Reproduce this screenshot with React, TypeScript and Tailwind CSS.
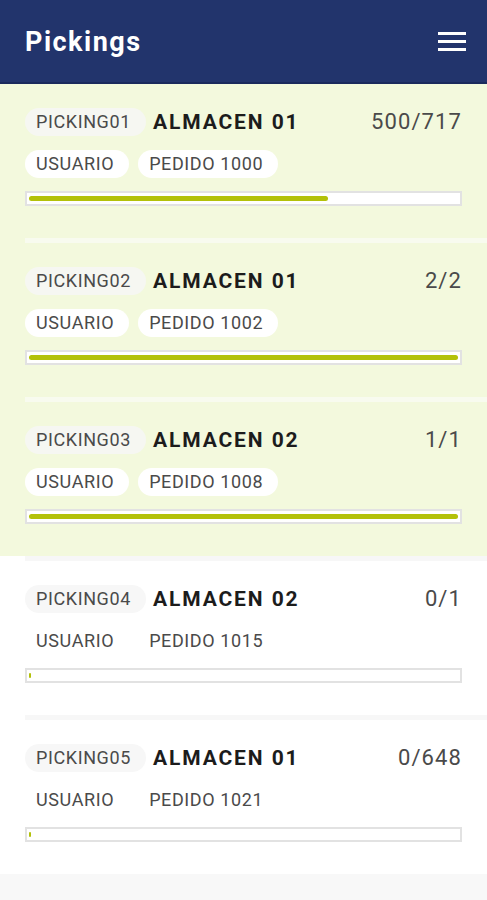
import React from "react";

interface Picking {
  code: string;
  warehouse: string;
  user: string;
  order: string;
  done: number;
  total: number;
}

const pickings: Picking[] = [
  { code: "PICKING01", warehouse: "ALMACEN 01", user: "USUARIO", order: "PEDIDO 1000", done: 500, total: 717 },
  { code: "PICKING02", warehouse: "ALMACEN 01", user: "USUARIO", order: "PEDIDO 1002", done: 2, total: 2 },
  { code: "PICKING03", warehouse: "ALMACEN 02", user: "USUARIO", order: "PEDIDO 1008", done: 1, total: 1 },
  { code: "PICKING04", warehouse: "ALMACEN 02", user: "USUARIO", order: "PEDIDO 1015", done: 0, total: 1 },
  { code: "PICKING05", warehouse: "ALMACEN 01", user: "USUARIO", order: "PEDIDO 1021", done: 0, total: 648 },
];

const Chip: React.FC<{ children: React.ReactNode; className?: string }> = ({ children, className }) => (
  <span
    className={`inline-flex h-[28px] items-center rounded-full pl-[11px] pr-[15px] text-[18px] leading-none tracking-[0.6px] text-[#4a4a4a] ${className ?? ""}`}
  >
    {children}
  </span>
);

const PickingRow: React.FC<{ item: Picking; first: boolean }> = ({ item, first }) => {
  const started = item.done > 0;
  const pct = item.total ? (item.done / item.total) * 100 : 0;
  const bg = started ? "bg-[#f3f9dd]" : "bg-white";
  return (
    <div className={bg}>
      {!first && (
        <div className={`ml-[25px] h-[5px] ${started ? "bg-[#f8fbef]" : "bg-[#f7f7f7]"}`} />
      )}
      <div className="h-[154px] px-[25px] pt-[24px]">
        <div className="flex h-[28px] items-center">
          <Chip className={started ? "bg-[#f6f7f2]" : "bg-[#f7f7f7]"}>{item.code}</Chip>
          <span className="ml-[7px] text-[21px] leading-none font-bold tracking-[1.9px] text-[#1c1c1c]">
            {item.warehouse}
          </span>
          <span className="ml-auto text-[22px] leading-none tracking-[1.1px] text-[#4a4a4a]">
            {item.done}/{item.total}
          </span>
        </div>
        <div className="mt-[14px] flex items-center gap-[9px]">
          <Chip className="bg-white">{item.user}</Chip>
          <Chip className="bg-white">{item.order}</Chip>
        </div>
        <div className="mt-[13px] h-[15px] border-2 border-[#e2e2e2] bg-white px-[2px] py-[3px]">
          <div
            className="h-[5px] min-w-[2px] rounded-full bg-[#b3c10a]"
            style={{ width: `${pct}%` }}
          />
        </div>
      </div>
    </div>
  );
};

export default function App() {
  return (
    <div
      className="min-h-[900px] bg-[#f8f8f8]"
      style={{ fontFamily: "Roboto, 'Liberation Sans', sans-serif" }}
    >
      <header className="flex h-[84px] items-center justify-between border-b-2 border-[#1a2a5c] bg-[#22346c] pl-[25px] pr-[21px]">
        <h1 className="pt-[3px] text-[27px] font-bold tracking-[1.5px] text-white">Pickings</h1>
        <div className="flex flex-col gap-[5px]">
          <span className="h-[3px] w-[28px] bg-white" />
          <span className="h-[3px] w-[28px] bg-white" />
          <span className="h-[3px] w-[28px] bg-white" />
        </div>
      </header>
      {pickings.map((p, i) => (
        <PickingRow key={p.code} item={p} first={i === 0} />
      ))}
    </div>
  );
}
